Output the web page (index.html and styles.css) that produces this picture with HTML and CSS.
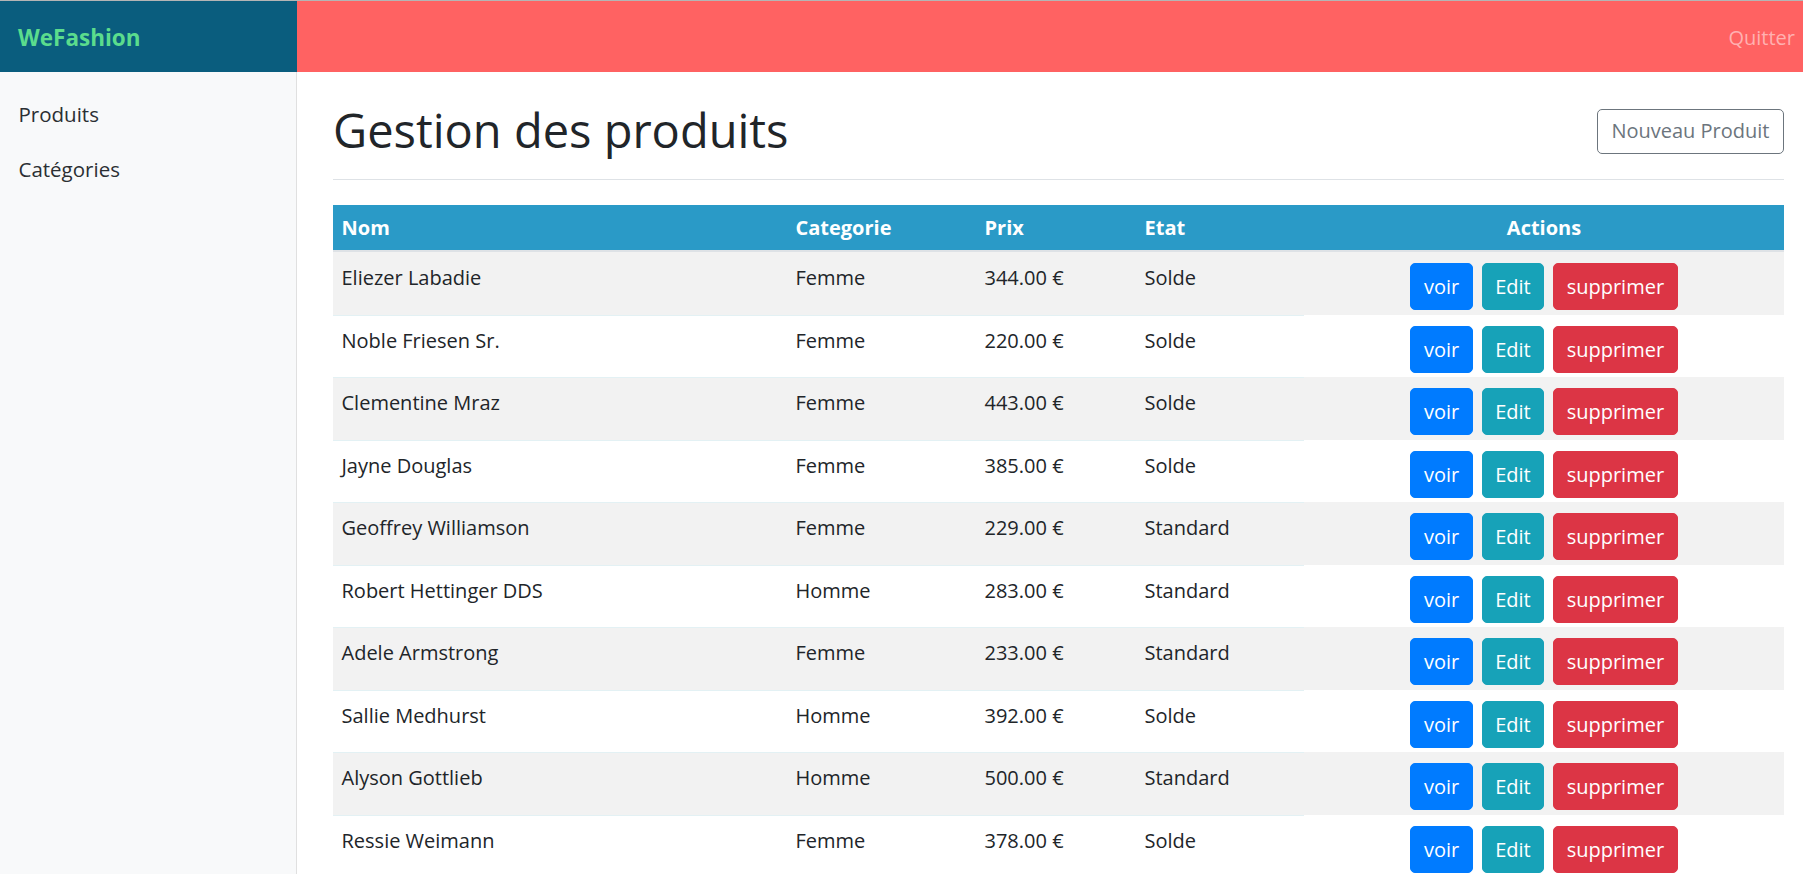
FILE: index.html
```html
<!DOCTYPE html>
<html lang="fr">
<head>
<meta charset="utf-8">
<title>WeFashion - Gestion des produits</title>
<link rel="stylesheet" href="styles.css">
</head>
<body>
<div class="layout">
  <a class="brand" href="#">WeFashion</a>
  <header class="topbar">
    <a class="quit" href="#">Quitter</a>
  </header>
  <nav class="sidebar">
    <a class="side-link" href="#">Produits</a>
    <a class="side-link" href="#">Catégories</a>
  </nav>
  <main class="main">
    <div class="page-head">
      <h1 class="title">Gestion des produits</h1>
      <a class="btn btn-outline" href="#">Nouveau Produit</a>
    </div>
    <table class="table">
      <colgroup>
        <col class="c-nom"><col class="c-cat"><col class="c-prix"><col class="c-etat"><col class="c-act">
      </colgroup>
      <thead>
        <tr><th>Nom</th><th>Categorie</th><th>Prix</th><th>Etat</th><th class="center">Actions</th></tr>
      </thead>
      <tbody>
        <tr><td>Eliezer Labadie</td><td>Femme</td><td>344.00 €</td><td>Solde</td><td class="actions"><div class="btns"><a class="btn btn-blue" href="#">voir</a><a class="btn btn-teal" href="#">Edit</a><a class="btn btn-red" href="#">supprimer</a></div></td></tr>
        <tr><td>Noble Friesen Sr.</td><td>Femme</td><td>220.00 €</td><td>Solde</td><td class="actions"><div class="btns"><a class="btn btn-blue" href="#">voir</a><a class="btn btn-teal" href="#">Edit</a><a class="btn btn-red" href="#">supprimer</a></div></td></tr>
        <tr><td>Clementine Mraz</td><td>Femme</td><td>443.00 €</td><td>Solde</td><td class="actions"><div class="btns"><a class="btn btn-blue" href="#">voir</a><a class="btn btn-teal" href="#">Edit</a><a class="btn btn-red" href="#">supprimer</a></div></td></tr>
        <tr><td>Jayne Douglas</td><td>Femme</td><td>385.00 €</td><td>Solde</td><td class="actions"><div class="btns"><a class="btn btn-blue" href="#">voir</a><a class="btn btn-teal" href="#">Edit</a><a class="btn btn-red" href="#">supprimer</a></div></td></tr>
        <tr><td>Geoffrey Williamson</td><td>Femme</td><td>229.00 €</td><td>Standard</td><td class="actions"><div class="btns"><a class="btn btn-blue" href="#">voir</a><a class="btn btn-teal" href="#">Edit</a><a class="btn btn-red" href="#">supprimer</a></div></td></tr>
        <tr><td>Robert Hettinger DDS</td><td>Homme</td><td>283.00 €</td><td>Standard</td><td class="actions"><div class="btns"><a class="btn btn-blue" href="#">voir</a><a class="btn btn-teal" href="#">Edit</a><a class="btn btn-red" href="#">supprimer</a></div></td></tr>
        <tr><td>Adele Armstrong</td><td>Femme</td><td>233.00 €</td><td>Standard</td><td class="actions"><div class="btns"><a class="btn btn-blue" href="#">voir</a><a class="btn btn-teal" href="#">Edit</a><a class="btn btn-red" href="#">supprimer</a></div></td></tr>
        <tr><td>Sallie Medhurst</td><td>Homme</td><td>392.00 €</td><td>Solde</td><td class="actions"><div class="btns"><a class="btn btn-blue" href="#">voir</a><a class="btn btn-teal" href="#">Edit</a><a class="btn btn-red" href="#">supprimer</a></div></td></tr>
        <tr><td>Alyson Gottlieb</td><td>Homme</td><td>500.00 €</td><td>Standard</td><td class="actions"><div class="btns"><a class="btn btn-blue" href="#">voir</a><a class="btn btn-teal" href="#">Edit</a><a class="btn btn-red" href="#">supprimer</a></div></td></tr>
        <tr><td>Ressie Weimann</td><td>Femme</td><td>378.00 €</td><td>Solde</td><td class="actions"><div class="btns"><a class="btn btn-blue" href="#">voir</a><a class="btn btn-teal" href="#">Edit</a><a class="btn btn-red" href="#">supprimer</a></div></td></tr>
      </tbody>
    </table>
  </main>
</div>
</body>
</html>
```

FILE: styles.css
```css
* { box-sizing: border-box; }
html, body { margin: 0; padding: 0; }
body {
  font-family: "Open Sans", "Noto Sans", sans-serif;
  font-size: 20px;
  line-height: 30px;
  color: #212529;
  background: #fff;
}
a { text-decoration: none; }

.layout {
  display: grid;
  grid-template-columns: 297px 1fr;
  grid-template-rows: 72px auto;
  min-height: 100vh;
}

.brand {
  grid-column: 1;
  grid-row: 1;
  display: flex;
  align-items: center;
  padding: 2px 0 0 18px;
  background: #0a5d7e;
  border-top: 1px solid #b5b5b5;
  color: #5bdc8d;
  font-weight: 700;
  font-size: 22.5px;
}

.topbar {
  grid-column: 2;
  grid-row: 1;
  display: flex;
  align-items: center;
  justify-content: flex-end;
  background: #ff6262;
  border-top: 1px solid #b5b5b5;
  padding: 2px 8px 0 0;
}
.quit {
  color: #ffb1b1;
  font-size: 20px;
}

.sidebar {
  grid-column: 1;
  grid-row: 2;
  display: flex;
  flex-direction: column;
  align-items: flex-start;
  background: #f8f9fa;
  border-right: 1px solid #e0e0e0;
  padding-top: 14px;
}
.side-link {
  display: block;
  padding: 12.5px 18.5px;
  color: #2b2f33;
  font-size: 20.5px;
  font-weight: 500;
}

.main {
  grid-column: 2;
  grid-row: 2;
  padding: 22px 19px 0 36px;
}

.page-head {
  display: flex;
  justify-content: space-between;
  align-items: center;
  padding-bottom: 11px;
  border-bottom: 1px solid #dee2e6;
  margin-bottom: 25px;
}
.title {
  margin: 6px 0 8px 0;
  font-size: 47px;
  line-height: 60px;
  font-weight: 500;
}

.btn {
  display: inline-block;
  border: 1px solid transparent;
  border-radius: 5px;
  padding: 8px 12.5px 7px;
  font-size: 20px;
  line-height: 30px;
  color: #fff;
  white-space: nowrap;
}
.btn-outline {
  color: #6c757d;
  border-color: #6c757d;
  padding: 6.5px 13.5px;
}
.btn-blue { background: #007bff; border-color: #007bff; }
.btn-teal { background: #17a2b8; border-color: #17a2b8; }
.btn-red { background: #dc3545; border-color: #dc3545; }

.table {
  width: 100%;
  table-layout: fixed;
  border-collapse: separate;
  border-spacing: 0;
}
.c-nom { width: 454px; }
.c-cat { width: 189px; }
.c-prix { width: 160px; }
.c-etat { width: 168px; }
.c-act { width: auto; }

.table th {
  background: #2a9ac7;
  color: #fff;
  font-weight: 700;
  text-align: left;
  padding: 8px 8.5px 7px;
  border-bottom: 2px solid #dee2e6;
}
.table th.center { text-align: center; }

.table td {
  vertical-align: top;
  padding: 10px 8.5px 4.5px;
  border-top: 1px solid #e3f1f4;
}
.table tbody tr:first-child td { border-top-color: #f2f2f2; }
.table tbody tr:nth-child(odd) { background: #f2f2f2; }
.table td.actions {
  border-top-color: transparent;
  text-align: center;
}
.btns {
  display: inline-flex;
  gap: 9px;
}
```
